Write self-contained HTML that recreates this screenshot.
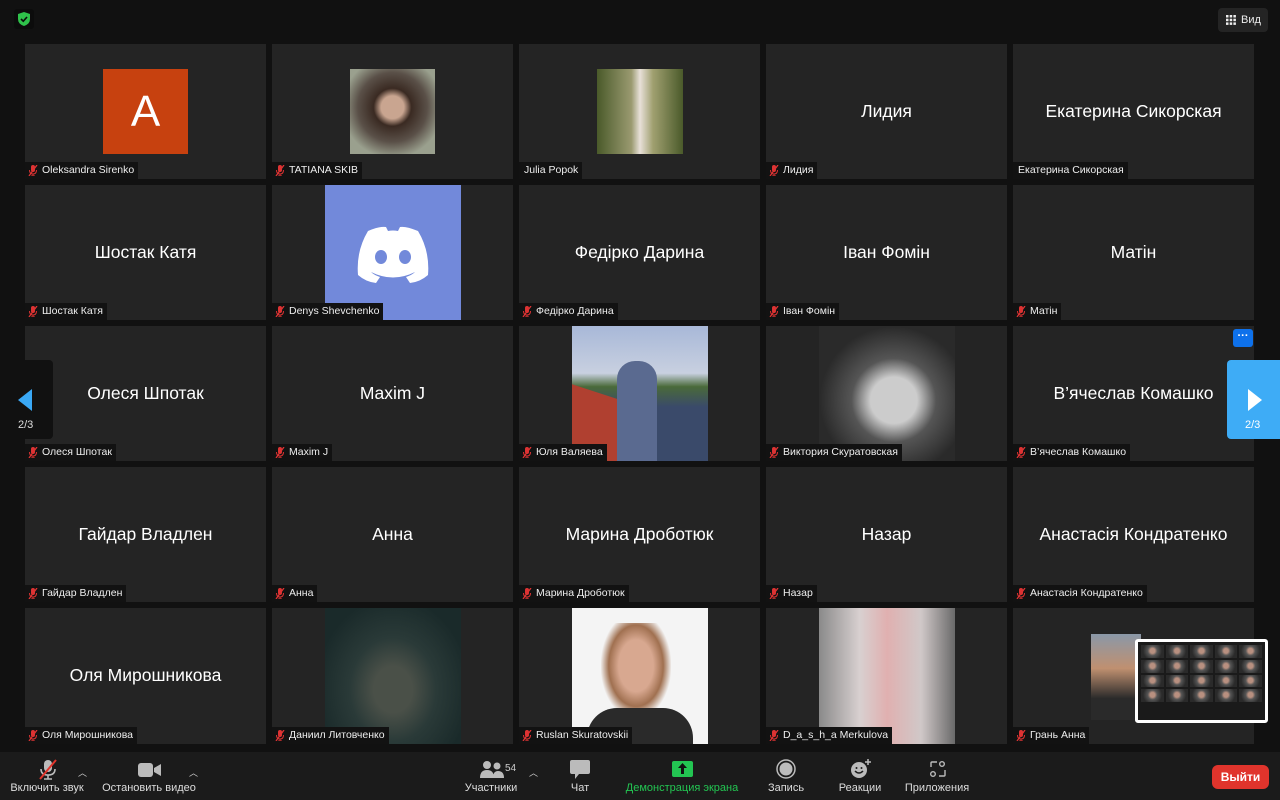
<!DOCTYPE html>
<html><head><meta charset="utf-8">
<style>
*{margin:0;padding:0;box-sizing:border-box}
body{width:1280px;height:800px;background:#111;position:relative;overflow:hidden;font-family:"Liberation Sans","DejaVu Sans",sans-serif;color:#fff}
.t{position:absolute;width:241px;height:135px;background:#242424;overflow:hidden}
.c{position:absolute;left:0;right:0;top:0;height:135px;display:flex;align-items:center;justify-content:center;font-size:17.5px;color:#fff}
.n{position:absolute;left:0;bottom:0;height:17px;background:#121212;font-size:10.5px;line-height:17px;padding:0 4px 0 17px;white-space:nowrap;color:#eee}
.n.nm{padding-left:5px}
.n svg{position:absolute;left:3px;top:3px}
.p{position:absolute;top:0;height:135px}
.tb{position:absolute;bottom:0;left:0;width:1280px;height:48px;background:#1b1b1b}
.lb{position:absolute;top:30px;font-size:11px;color:#ddd;white-space:nowrap;transform:translateX(-50%)}
.car{position:absolute;top:14px;font-size:9px;color:#ccc}
.g{display:grid;grid-template-columns:repeat(5,1fr);grid-template-rows:repeat(5,1fr);gap:2px;padding:3px;position:absolute;left:1138px;top:642px;width:127px;height:78px}
.g div{background:radial-gradient(circle at 50% 45%,#b89080 0 18%,#555 35%,#2a2a2a 70%)}
</style></head><body>
<svg width="0" height="0" style="position:absolute"><defs>
<g id="m"><rect x="3" y="0" width="4" height="7" rx="2" fill="#d33"/><path d="M1.5 5 Q1.5 9 5 9 Q8.5 9 8.5 5 M5 9 V11 M3 11 H7" stroke="#d33" fill="none" stroke-width="1"/><path d="M1 11 L9 0" stroke="#d33" stroke-width="1.3"/></g>
</defs></svg>

<div style="position:absolute;left:14px;top:9px;width:20px;height:20px;background:#0c0c0c;border-radius:3px"></div>
<svg style="position:absolute;left:18px;top:12px" width="12" height="14" viewBox="0 0 12 14"><path d="M6 0 L12 2 V7 Q12 12 6 14 Q0 12 0 7 V2Z" fill="#2fc24b"/><path d="M3 7 L5.3 9.2 L9 5" stroke="#0c0c0c" stroke-width="1.6" fill="none"/></svg>
<div style="position:absolute;left:1218px;top:8px;width:50px;height:24px;background:#242424;border-radius:4px;font-size:11px;line-height:24px;padding-left:23px;color:#eee">Вид</div>
<svg style="position:absolute;left:1226px;top:15px" width="10" height="10"><g fill="#eee"><rect x="0" y="0" width="2.5" height="2.5"/><rect x="3.7" y="0" width="2.5" height="2.5"/><rect x="7.4" y="0" width="2.5" height="2.5"/><rect x="0" y="3.7" width="2.5" height="2.5"/><rect x="3.7" y="3.7" width="2.5" height="2.5"/><rect x="7.4" y="3.7" width="2.5" height="2.5"/><rect x="0" y="7.4" width="2.5" height="2.5"/><rect x="3.7" y="7.4" width="2.5" height="2.5"/><rect x="7.4" y="7.4" width="2.5" height="2.5"/></g></svg>

<div class="t" style="left:25px;top:44px"><div style="position:absolute;left:78px;top:25px;width:85px;height:85px;background:#c7410f;font-size:44px;text-align:center;line-height:85px">A</div><div class="n"><svg width="10" height="11"><use href="#m"/></svg>Oleksandra Sirenko</div></div>
<div class="t" style="left:272px;top:44px"><div style="position:absolute;left:78px;top:25px;width:85px;height:85px;background:radial-gradient(circle at 50% 45%,#c9a590 0 18%,#3a2a22 30%,#5a5048 55%,#9aa08e 80%)"></div><div class="n"><svg width="10" height="11"><use href="#m"/></svg>TATIANA SKIB</div></div>
<div class="t" style="left:519px;top:44px"><div style="position:absolute;left:78px;top:25px;width:86px;height:85px;background:linear-gradient(90deg,#4a5a2a,#9a9a70 40%,#e8e0d8 50%,#a0a070 65%,#4a5a2a)"></div><div class="n nm">Julia Popok</div></div>
<div class="t" style="left:766px;top:44px"><div class="c">Лидия</div><div class="n"><svg width="10" height="11"><use href="#m"/></svg>Лидия</div></div>
<div class="t" style="left:1013px;top:44px"><div class="c">Екатерина Сикорская</div><div class="n nm">Екатерина Сикорская</div></div>

<div class="t" style="left:25px;top:185px"><div class="c">Шостак Катя</div><div class="n"><svg width="10" height="11"><use href="#m"/></svg>Шостак Катя</div></div>
<div class="t" style="left:272px;top:185px"><div class="p" style="left:53px;width:136px;background:#7289da"></div>
<svg style="position:absolute;left:78px;top:40px" width="86" height="60" viewBox="0 0 86 60"><path d="M18 6 Q30 1 36 2 L38 6 Q43 5 48 6 L50 2 Q56 1 68 6 Q80 26 78 50 Q70 57 60 58 L56 52 Q62 50 65 47 Q43 58 21 47 Q24 50 30 52 L26 58 Q16 57 8 50 Q6 26 18 6Z" fill="#fff"/><ellipse cx="31" cy="32" rx="6" ry="7" fill="#7289da"/><ellipse cx="55" cy="32" rx="6" ry="7" fill="#7289da"/></svg>
<div class="n"><svg width="10" height="11"><use href="#m"/></svg>Denys Shevchenko</div></div>
<div class="t" style="left:519px;top:185px"><div class="c">Федірко Дарина</div><div class="n"><svg width="10" height="11"><use href="#m"/></svg>Федірко Дарина</div></div>
<div class="t" style="left:766px;top:185px"><div class="c">Іван Фомін</div><div class="n"><svg width="10" height="11"><use href="#m"/></svg>Іван Фомін</div></div>
<div class="t" style="left:1013px;top:185px"><div class="c">Матін</div><div class="n"><svg width="10" height="11"><use href="#m"/></svg>Матін</div></div>

<div class="t" style="left:25px;top:326px"><div class="c">Олеся Шпотак</div><div class="n"><svg width="10" height="11"><use href="#m"/></svg>Олеся Шпотак</div></div>
<div class="t" style="left:272px;top:326px"><div class="c">Maxim J</div><div class="n"><svg width="10" height="11"><use href="#m"/></svg>Maxim J</div></div>
<div class="t" style="left:519px;top:326px"><div class="p" style="left:53px;width:136px;background:linear-gradient(180deg,#a8b8d8 0,#c8d0e0 35%,#4a6a3a 45%,#3a4a6a 60%,#3a4a6a 100%)"></div><div style="position:absolute;left:53px;top:68px;width:60px;height:67px;background:#b04030;transform:skewY(18deg)"></div><div style="position:absolute;left:98px;top:35px;width:40px;height:100px;background:#5a6a90;border-radius:18px 18px 0 0"></div><div class="n"><svg width="10" height="11"><use href="#m"/></svg>Юля Валяева</div></div>
<div class="t" style="left:766px;top:326px"><div class="p" style="left:53px;width:136px;background:radial-gradient(ellipse at 55% 55%,#ccc 0 22%,#555 40%,#2a2a2a 70%)"></div><div class="n"><svg width="10" height="11"><use href="#m"/></svg>Виктория Скуратовская</div></div>
<div class="t" style="left:1013px;top:326px"><div class="c">В’ячеслав Комашко</div><div class="n"><svg width="10" height="11"><use href="#m"/></svg>В’ячеслав Комашко</div></div>
<div style="position:absolute;left:1233px;top:329px;width:20px;height:18px;background:#0e71eb;border-radius:3px;font-size:11px;text-align:center;line-height:14px;font-weight:bold">···</div>

<div class="t" style="left:25px;top:467px"><div class="c">Гайдар Владлен</div><div class="n"><svg width="10" height="11"><use href="#m"/></svg>Гайдар Владлен</div></div>
<div class="t" style="left:272px;top:467px"><div class="c">Анна</div><div class="n"><svg width="10" height="11"><use href="#m"/></svg>Анна</div></div>
<div class="t" style="left:519px;top:467px"><div class="c">Марина Дроботюк</div><div class="n"><svg width="10" height="11"><use href="#m"/></svg>Марина Дроботюк</div></div>
<div class="t" style="left:766px;top:467px"><div class="c">Назар</div><div class="n"><svg width="10" height="11"><use href="#m"/></svg>Назар</div></div>
<div class="t" style="left:1013px;top:467px"><div class="c">Анастасія Кондратенко</div><div class="n"><svg width="10" height="11"><use href="#m"/></svg>Анастасія Кондратенко</div></div>

<div class="t" style="left:25px;top:608px;height:136px"><div class="c">Оля Мирошникова</div><div class="n"><svg width="10" height="11"><use href="#m"/></svg>Оля Мирошникова</div></div>
<div class="t" style="left:272px;top:608px;height:136px"><div class="p" style="left:53px;width:136px;height:136px;background:radial-gradient(ellipse at 50% 60%,#4a5048 0 20%,#2a3a38 45%,#1a2a2a 80%)"></div><div class="n"><svg width="10" height="11"><use href="#m"/></svg>Даниил Литовченко</div></div>
<div class="t" style="left:519px;top:608px;height:136px"><div class="p" style="left:53px;width:136px;height:136px;background:#f4f4f4"></div><div style="position:absolute;left:82px;top:15px;width:70px;height:95px;background:radial-gradient(ellipse at 50% 45%,#d8a890 0 35%,#a07050 55%,#f4f4f4 72%)"></div><div style="position:absolute;left:68px;top:100px;width:106px;height:36px;background:#2a2a2a;border-radius:30px 30px 0 0"></div><div class="n"><svg width="10" height="11"><use href="#m"/></svg>Ruslan Skuratovskii</div></div>
<div class="t" style="left:766px;top:608px;height:136px"><div class="p" style="left:53px;width:136px;height:136px;background:linear-gradient(90deg,#8a8a8a,#d8d0d0 30%,#e0b0b0 50%,#d0c8c8 75%,#6a6a6a)"></div><div class="n"><svg width="10" height="11"><use href="#m"/></svg>D_a_s_h_a Merkulova</div></div>
<div class="t" style="left:1013px;top:608px;height:136px"><div class="n"><svg width="10" height="11"><use href="#m"/></svg>Грань Анна</div></div>

<div style="position:absolute;left:1091px;top:634px;width:50px;height:86px;background:linear-gradient(180deg,#8a98a8,#c09070 40%,#2a2a2a 75%)"></div>
<div style="position:absolute;left:1135px;top:639px;width:133px;height:84px;background:#1a1a1a;border:3px solid #fff;border-radius:3px"></div>
<div class="g"><div></div><div></div><div></div><div></div><div></div><div></div><div></div><div></div><div></div><div></div><div></div><div></div><div></div><div></div><div></div><div></div><div></div><div></div><div></div><div></div></div>

<div style="position:absolute;left:0;top:360px;width:53px;height:79px;background:#111;border-radius:0 4px 4px 0"></div>
<svg style="position:absolute;left:18px;top:389px" width="14" height="22"><path d="M14 0 V22 L0 11Z" fill="#3aa8f5"/></svg>
<div style="position:absolute;left:18px;top:419px;font-size:11px;color:#ddd">2/3</div>
<div style="position:absolute;left:1227px;top:360px;width:53px;height:79px;background:#3eacf6;border-radius:4px 0 0 4px"></div>
<svg style="position:absolute;left:1248px;top:389px" width="14" height="22"><path d="M0 0 V22 L14 11Z" fill="#fff"/></svg>
<div style="position:absolute;left:1245px;top:419px;font-size:11px;color:#fff">2/3</div>

<div class="tb">
<svg style="position:absolute;left:37px;top:7px" width="22" height="22" viewBox="0 0 22 22"><rect x="7" y="1" width="8" height="12" rx="4" fill="#bbb"/><path d="M4 10 Q4 16 11 16 Q18 16 18 10 M11 16 V20 M7 20 H15" stroke="#bbb" stroke-width="1.6" fill="none"/><path d="M3 20 L19 1" stroke="#e0342c" stroke-width="2"/></svg>
<div class="car" style="left:78px">︿</div>
<div class="lb" style="left:47px">Включить звук</div>
<svg style="position:absolute;left:138px;top:10px" width="24" height="16"><rect x="0" y="1" width="15" height="14" rx="3" fill="#bbb"/><path d="M16 6 L23 2 V14 L16 10Z" fill="#bbb"/></svg>
<div class="car" style="left:189px">︿</div>
<div class="lb" style="left:149px">Остановить видео</div>
<svg style="position:absolute;left:480px;top:8px" width="24" height="18"><circle cx="7" cy="5" r="4" fill="#bbb"/><circle cx="17" cy="6" r="3.5" fill="#bbb"/><path d="M0 18 Q0 10 7 10 Q14 10 14 18Z M13 18 Q13 11 18 11 Q24 11 24 18Z" fill="#bbb"/></svg>
<div style="position:absolute;left:505px;top:11px;font-size:10px;color:#ccc">54</div>
<div class="car" style="left:529px">︿</div>
<div class="lb" style="left:491px">Участники</div>
<svg style="position:absolute;left:570px;top:8px" width="20" height="20"><path d="M2 0 H18 Q20 0 20 2 V12 Q20 14 18 14 H9 L5 19 V14 H2 Q0 14 0 12 V2 Q0 0 2 0Z" fill="#bbb"/></svg>
<div class="lb" style="left:580px">Чат</div>
<div style="position:absolute;left:672px;top:9px;width:21px;height:16px;background:#23c552;border-radius:2px"></div>
<svg style="position:absolute;left:678px;top:11px" width="9" height="11"><path d="M4.5 0 L9 5 H6 V11 H3 V5 H0Z" fill="#111"/></svg>
<div class="lb" style="left:682px;color:#23c552">Демонстрация экрана</div>
<svg style="position:absolute;left:776px;top:7px" width="20" height="20"><circle cx="10" cy="10" r="9" stroke="#bbb" stroke-width="1.5" fill="none"/><circle cx="10" cy="10" r="6.5" fill="#bbb"/></svg>
<div class="lb" style="left:786px">Запись</div>
<svg style="position:absolute;left:850px;top:6px" width="22" height="22"><circle cx="9" cy="12" r="8" fill="#bbb"/><path d="M5 13 Q9 17 13 13" stroke="#1b1b1b" stroke-width="1.5" fill="none"/><circle cx="6.5" cy="10" r="1" fill="#1b1b1b"/><circle cx="11.5" cy="10" r="1" fill="#1b1b1b"/><path d="M18 1 V7 M15 4 H21" stroke="#bbb" stroke-width="1.5"/></svg>
<div class="lb" style="left:860px">Реакции</div>
<svg style="position:absolute;left:929px;top:8px" width="18" height="18" fill="none" stroke="#bbb" stroke-width="1.4"><path d="M8 2 H3 Q2 2 2 3 V7 M16 10 V15 Q16 16 15 16 H10"/><circle cx="13" cy="4" r="2.3"/><circle cx="4" cy="14" r="2.3"/></svg>
<div class="lb" style="left:937px">Приложения</div>
<div style="position:absolute;left:1212px;top:13px;width:57px;height:24px;background:#e0342c;border-radius:6px;font-size:12px;font-weight:bold;text-align:center;line-height:24px;color:#fff">Выйти</div>
</div>
</body></html>
